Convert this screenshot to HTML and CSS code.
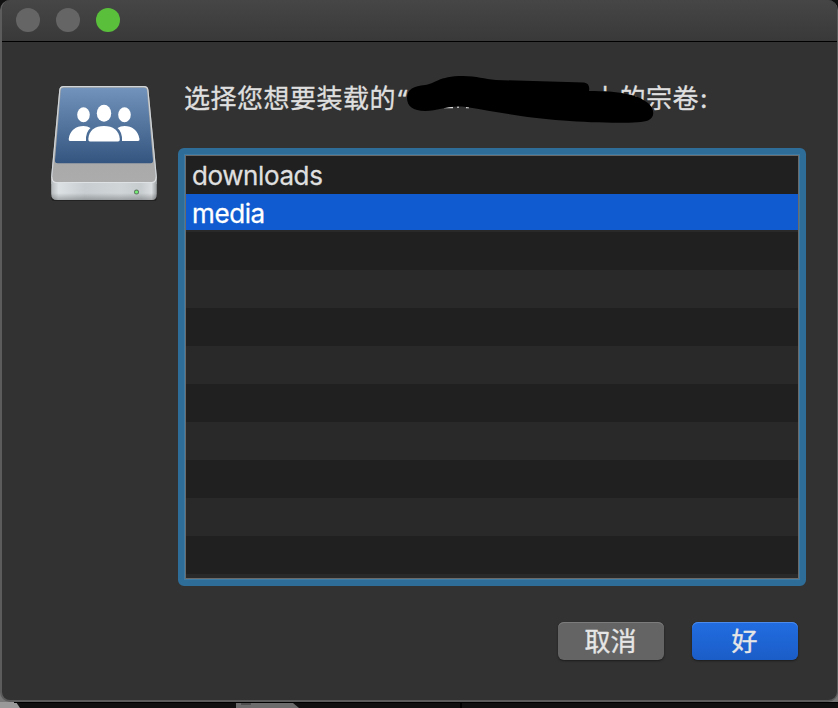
FILE: index.html
```html
<!DOCTYPE html>
<html lang="zh-CN">
<head>
<meta charset="utf-8">
<title>选择宗卷</title>
<link rel="stylesheet" href="styles.css">
</head>
<body>
<div class="window">
  <header class="titlebar">
    <span class="light"></span><span class="light"></span><span class="light zoom"></span>
  </header>
  <main class="content">
    <svg class="drive" width="130" height="136" viewBox="0 0 130 136">
      <defs>
        <linearGradient id="blue" x1="0" y1="0" x2="0" y2="1"><stop offset="0" stop-color="#7293bb"/><stop offset="1" stop-color="#33557f"/></linearGradient>
        <linearGradient id="metal" x1="0" y1="0" x2="0" y2="1"><stop offset="0" stop-color="#a0a0a0"/><stop offset="1" stop-color="#acacac"/></linearGradient>
        <linearGradient id="front" x1="0" y1="0" x2="1" y2="0"><stop offset="0" stop-color="#b5b9bb"/><stop offset=".07" stop-color="#dce1e4"/><stop offset=".32" stop-color="#c7cdd0"/><stop offset=".65" stop-color="#d0d5d8"/><stop offset=".85" stop-color="#c7cccf"/><stop offset=".95" stop-color="#dadddf"/><stop offset="1" stop-color="#999d9f"/></linearGradient>
        <linearGradient id="shade" x1="0" y1="0" x2="0" y2="1"><stop offset=".7" stop-color="#000" stop-opacity="0"/><stop offset="1" stop-color="#000" stop-opacity=".25"/></linearGradient>
      </defs>
      <path d="M13 125H115Q117 125 117 120V116H11V120Q11 125 14 125Z" fill="#222"/>
      <path d="M23.500 10H104Q108 10 108.400 14L116.800 101V108H11.200V101L19.300 14Q19.700 10 23.500 10Z" fill="url(#metal)"/>
      <path d="M11.700 101L19.800 14Q20.200 10.600 23.500 10.600H104Q107.500 10.600 107.900 14L116.300 101" fill="none" stroke="#cfd5d9" stroke-width="1.200"/>
      <path d="M23.500 11.800H104Q106.500 11.800 106.900 14L113 84Q113.300 87.300 110.500 87.300H17.500Q14.700 87.300 15 84L20.800 14Q21.200 11.800 23.500 11.800Z" fill="url(#blue)"/>
      <path d="M11.200 101Q11.500 106.500 16 106.500H112Q116.500 106.500 116.800 101V118Q116.800 124 112 124H17Q11.200 124 11.200 118Z" fill="url(#front)"/>
      <path d="M11.200 101Q11.500 106.500 16 106.500H112Q116.500 106.500 116.800 101V118Q116.800 124 112 124H17Q11.200 124 11.200 118Z" fill="url(#shade)"/>
      <path d="M11.800 101V78M116.200 101V78" stroke="none"/>
      <path d="M11.800 101Q12 106.500 16 106.500H112Q116 106.500 116.200 101" fill="none" stroke="#dfe2e4" stroke-width="1.200"/>
      <circle cx="96.500" cy="116" r="2.500" fill="#5e7661"/><circle cx="96.500" cy="116" r="1.600" fill="#74ee74"/>
      <g fill="#fff">
        <ellipse cx="43.500" cy="38.800" rx="6.300" ry="7.500"/>
        <ellipse cx="84.500" cy="38.800" rx="6.300" ry="7.500"/>
        <ellipse cx="64" cy="37.300" rx="7.200" ry="8.500"/>
        <path d="M50.500 52Q45.500 56 46 65H30Q28.500 65 28.700 63C30 54 36 50 43.500 50Q47.500 50 50.500 52Z"/>
        <path d="M77.500 52Q82.500 56 82 65H98Q99.800 65 99.500 63C98 54 92 50 84.500 50Q80.500 50 77.500 52Z"/>
        <path d="M48.300 63C49 54 55 50 64 50S79 54 79.800 63Q80 65.500 78 65.500H50Q48.200 65.500 48.300 63Z"/>
      </g>
    </svg>
    <section class="panel">
      <h1 class="prompt">
        <span class="lead">选择您想要装载的<span class="quote">“</span></span><span class="tail">上的宗卷<span class="colon">:</span></span>
        <svg class="redaction" width="260" height="60" viewBox="400 70 260 60">
          <path d="M444 107.500H453M457 107H459M466 107.500H469" stroke="#ddd" stroke-width="1.500"/>
          <path d="M407 98C407 89 414 86 425 85C435 84 438 76 463 76C477 76 484 79 496 80L584 82.500C588 83 590 86 589 91C619 91 637 94 648 103C654 108 656 117 648 120.500C640 124 596 123 563 120.500C526 118 498 112 466 107C446 105 440 111 425 111C413 111 407 106 407 98Z"/>
        </svg>
      </h1>
      <ul class="list">
        <li>downloads</li><li class="selected">media</li>
        <li></li><li></li><li></li><li></li><li></li><li></li><li></li><li></li><li></li><li></li>
      </ul>
      <footer class="actions">
        <button class="cancel">取消</button><button class="ok">好</button>
      </footer>
    </section>
  </main>
</div>
<svg class="backdrop" width="838" height="6" viewBox="0 0 838 6">
  <rect width="838" height="6" fill="#101010"/>
  <path d="M0 0H16L20 6H0Z" fill="#999"/>
  <path d="M236 1H293L299 6H236Z" fill="#6b6b6b"/>
  <path d="M241 2H251" stroke="#333"/>
  <path d="M461 0V6" stroke="#000" stroke-width="2"/>
  <path d="M14 .5H838" stroke="#000"/>
</svg>
</body>
</html>
```
FILE: styles.css
```css
* { box-sizing: border-box; }

body {
  margin: 0;
  width: 838px;
  height: 708px;
  overflow: hidden;
  background: linear-gradient(#111 0 50%, #777 50%);
  color: #dfdfdf;
  font: 26px/38px "Noto Sans CJK SC", sans-serif;
}

.window {
  width: 838px;
  height: 702px;
  border: solid #5c5c5c;
  border-width: 0 1px 2px 2px;
  border-radius: 10px;
  background: #323232;
  overflow: hidden;
}

.titlebar {
  display: flex;
  align-items: center;
  gap: 16px;
  height: 42px;
  padding: 0 14px 1px;
  background: linear-gradient(#464646, #393939);
  border-bottom: 1px solid #000;
}

.light {
  width: 24px;
  height: 24px;
  border-radius: 50%;
  background: #656565;
}

.zoom { background: #5ac03b; }

.content {
  display: flex;
  padding: 34px 31px 0 38px;
}

.drive { flex: none; }

.panel { width: 628px; margin-left: 8px; }

.prompt {
  position: relative;
  display: flex;
  justify-content: space-between;
  height: 72px;
  margin: 0;
  padding: 2px 94px 0 6px;
  font-size: 26px;
  font-weight: 400;
  letter-spacing: .5px;
  white-space: nowrap;
  -webkit-text-stroke: .35px currentColor;
}

.quote { margin-left: 2px; font-family: "Noto Sans", sans-serif; }

.colon {
  display: inline-block;
  width: 13px;
  padding-left: 1px;
  font-family: Inter, sans-serif;
}

.redaction {
  position: absolute;
  left: 222px;
  top: -6px;
}

.list {
  height: 438px;
  margin: 0;
  list-style: none;
  border: 6px solid #2e6d98;
  border-radius: 6px;
  outline: 1px solid #6a6a6a;
  outline-offset: -8px;
  padding: 2px;
  background: #3d7ba5;
  font-family: Inter, "Noto Sans CJK SC", sans-serif;
  letter-spacing: -.4px;
}

.list li {
  height: 38px;
  padding: 1px 0 0 6px;
  background: #202020;
  -webkit-text-stroke: .3px currentColor;
}

.list li:nth-child(even) { background: #292929; }

.list li.selected {
  background: #0f5bcf;
  border-bottom: 2px solid #292929;
  color: #fff;
}

.list li:last-child { height: 4px; }

.actions {
  display: flex;
  justify-content: flex-end;
  gap: 28px;
  padding: 36px 8px 0 0;
}

.actions button {
  width: 106px;
  height: 38px;
  padding: 0 1px 2px 0;
  border: 0;
  border-radius: 6px;
  color: #e6e6e6;
  background: #646464;
  font: 26px/36px "Noto Sans CJK SC", sans-serif;
  -webkit-text-stroke: .35px currentColor;
  box-shadow: inset 0 1px #7c7c7c, 0 1px 2px #1c1c1c;
}

.actions .ok {
  background: linear-gradient(#216de2, #1b5dc7);
  box-shadow: inset 0 1px #4c8bec, 0 1px 2px #1c1c1c;
}

.backdrop { display: block; }
```
